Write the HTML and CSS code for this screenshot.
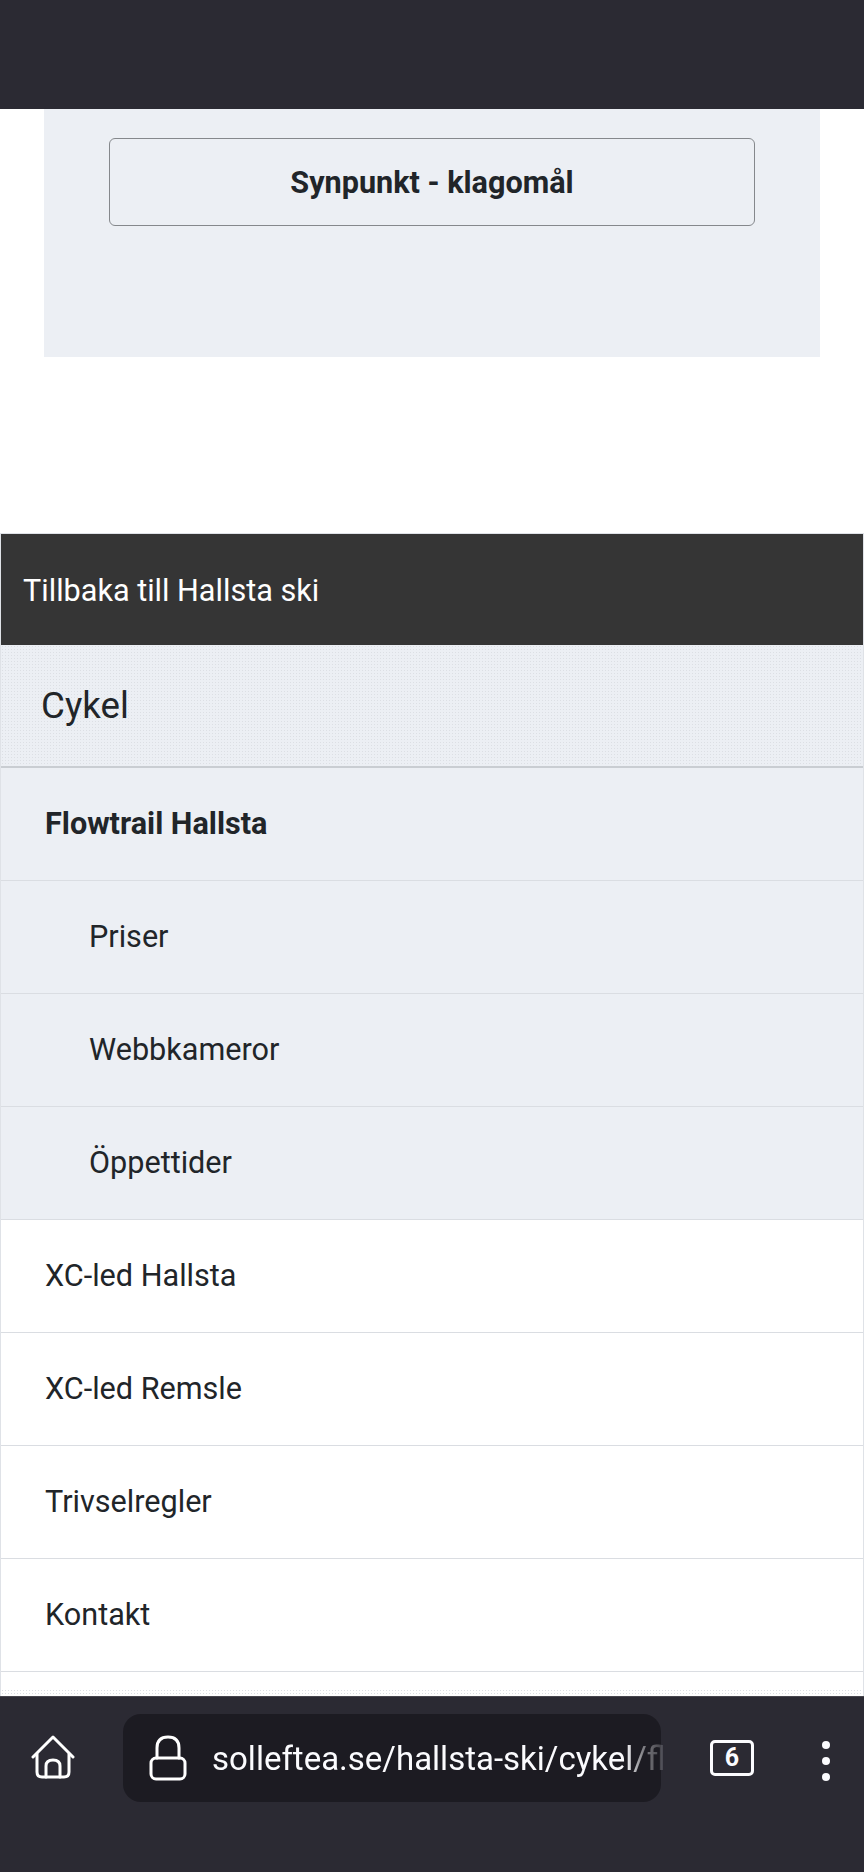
FILE: index.html
```html
<!DOCTYPE html>
<html lang="sv">
<head>
  <meta charset="UTF-8">
  <title>Flowtrail Hallsta</title>
  <link rel="stylesheet" href="styles.css">
</head>
<body>
  <div class="top-bar"></div>

  <main class="page">
    <section class="panel">
      <a class="panel-button" href="#">Synpunkt - klagomål</a>
    </section>

    <nav class="side-menu">
      <a class="back-link" href="#">Tillbaka till Hallsta ski</a>
      <h2 class="menu-title">Cykel</h2>
      <ul class="menu-list">
        <li class="menu-item active"><a href="#">Flowtrail Hallsta</a></li>
        <li class="menu-item sub"><a href="#">Priser</a></li>
        <li class="menu-item sub"><a href="#">Webbkameror</a></li>
        <li class="menu-item sub"><a href="#">Öppettider</a></li>
        <li class="menu-item"><a href="#">XC-led Hallsta</a></li>
        <li class="menu-item"><a href="#">XC-led Remsle</a></li>
        <li class="menu-item"><a href="#">Trivselregler</a></li>
        <li class="menu-item"><a href="#">Kontakt</a></li>
      </ul>
      <div class="menu-next"></div>
    </nav>
  </main>

  <footer class="browser-bar">
    <!-- Home -->
    <svg class="icon-home" width="44" height="44" viewBox="0 0 44 44" fill="none" stroke="#fff" stroke-width="3" stroke-linecap="round" stroke-linejoin="round">
      <path d="M2 22 L22 2 L42 22"/>
      <path d="M6 19 V37 Q6 42 11 42 H33 Q38 42 38 37 V19"/>
      <path d="M15 42 V31 Q15 25 22 25 Q29 25 29 31 V42"/>
    </svg>

    <div class="url-bar">
      <!-- Lock -->
      <svg class="icon-lock" width="38" height="46" viewBox="0 0 38 46" fill="none" stroke="#fff" stroke-width="3" stroke-linecap="round" stroke-linejoin="round">
        <rect x="2" y="23" width="34" height="21" rx="5"/>
        <path d="M8 23 V13 Q8 2 19 2 Q30 2 30 13 V23"/>
      </svg>
      <span class="url-text">solleftea.se/hallsta-ski/cykel/fl</span>
    </div>

    <div class="tab-count">6</div>

    <div class="more-dots">
      <span></span>
      <span></span>
      <span></span>
    </div>
  </footer>
</body>
</html>
```

FILE: styles.css
```css
html, body {
  margin: 0;
  height: 100%;
  overflow: hidden;
}
body {
  display: flex;
  flex-direction: column;
  width: 864px;
  height: 1872px;
  background: #fff;
  color: #212529;
  font-family: Roboto, 'Noto Sans', sans-serif;
}
a {
  color: inherit;
  text-decoration: none;
}

.top-bar {
  flex: none;
  height: 109px;
  background: #2b2a33;
}

.page {
  flex: 1;
  min-height: 0;
  overflow: hidden;
}

/* Panel with the feedback button */
.panel {
  box-sizing: border-box;
  height: 248px;
  margin: 0 44px 176px;
  padding: 29px 65px 0;
  background: #eceff4;
}
.panel-button {
  display: flex;
  justify-content: center;
  align-items: center;
  height: 86px;
  border: 1px solid #85888c;
  border-radius: 6px;
  font-size: 30.6px;
  font-weight: 700;
}

/* Section menu */
.side-menu {
  border: solid #dfe2e7;
  border-width: 1px 1px 0;
}
.back-link {
  display: flex;
  align-items: center;
  box-sizing: border-box;
  height: 111px;
  padding: 2px 22px 0;
  background: #353535;
  color: #fff;
  font-size: 30.6px;
}
.menu-title {
  box-sizing: border-box;
  height: 123px;
  margin: 0;
  padding: 0 40px;
  border-bottom: 2px solid #c9cdd2;
  background-color: #eceff4;
  background-image: radial-gradient(#dcdfe4 0.7px, transparent 0.8px);
  background-size: 3px 3px;
  font-size: 36.7px;
  font-weight: 400;
  line-height: 121px;
}
.menu-list {
  margin: 0;
  padding: 0;
  list-style: none;
}
.menu-item {
  box-sizing: border-box;
  height: 113px;
  border-bottom: 1px solid #dadde2;
  font-size: 30.6px;
  line-height: 112px;
}
.menu-item a {
  display: block;
  padding-left: 44px;
}
.menu-item.active {
  background: #eceff4;
  font-weight: 700;
}
.menu-item.sub {
  background: #eceff4;
}
.menu-item.sub a {
  padding-left: 88px;
}
.menu-next {
  height: 9px;
  margin-top: 17px;
  background-image: radial-gradient(#dcdfe4 0.7px, transparent 0.8px);
  background-size: 3px 3px;
}

/* Browser toolbar */
.browser-bar {
  flex: none;
  display: flex;
  align-items: flex-start;
  box-sizing: border-box;
  height: 176px;
  padding: 17px 0 0 31px;
  border-top: 1px solid #47464e;
  background: #2b2a33;
}
.icon-home {
  flex: none;
  margin-top: 21px;
}
.url-bar {
  flex: none;
  display: flex;
  align-items: center;
  gap: 25px;
  box-sizing: border-box;
  width: 538px;
  height: 88px;
  margin-left: 48px;
  padding: 0 0 0 26px;
  border-radius: 18px;
  background: #1c1b22;
}
.icon-lock {
  flex: none;
}
.url-text {
  white-space: nowrap;
  color: #fbfbfe;
  font-size: 33px;
  -webkit-mask-image: linear-gradient(to right, #000 91%, rgba(0, 0, 0, 0.45) 95%, rgba(0, 0, 0, 0.12));
  mask-image: linear-gradient(to right, #000 91%, rgba(0, 0, 0, 0.45) 95%, rgba(0, 0, 0, 0.12));
}
.tab-count {
  flex: none;
  box-sizing: border-box;
  width: 44px;
  height: 36px;
  margin: 26px 0 0 49px;
  border: 3px solid #fbfbfe;
  border-radius: 5px;
  color: #fbfbfe;
  font-size: 25px;
  font-weight: 700;
  line-height: 30px;
  text-align: center;
}
.more-dots {
  flex: none;
  display: flex;
  flex-direction: column;
  gap: 8px;
  margin: 27px 0 0 68px;
}
.more-dots span {
  width: 8px;
  height: 8px;
  border-radius: 50%;
  background: #fbfbfe;
}
```
